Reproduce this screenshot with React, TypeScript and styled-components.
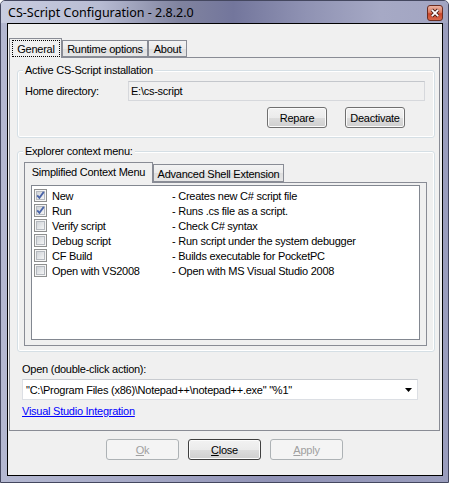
import React from 'react';
import styled, { createGlobalStyle } from 'styled-components';

const GlobalStyle = createGlobalStyle`
  html, body { margin: 0; padding: 0; background: #ffffff; }
  body { font-family: "Liberation Sans", Arial, sans-serif; font-size: 11px; letter-spacing: -0.25px; color: #000; }
  * { box-sizing: border-box; }
`;

const Window = styled.div`
  width: 449px;
  height: 483px;
  display: flex;
  flex-direction: column;
  border: 1px solid #44475f;
  border-radius: 5px 5px 0 0;
  background: linear-gradient(90deg, #b4b8d1 0%, #a6a9c6 30%, #9193b6 60%, #9a9dbd 100%);
  overflow: hidden;
`;

const TitleBar = styled.div`
  height: 22px;
  flex: none;
  display: flex;
  align-items: center;
  justify-content: space-between;
  padding: 0 5px 0 7px;
  background: linear-gradient(90deg, #c9cde0 0%, #b8bcd3 22%, #80839f 40%, #73769c 52%, #8f92b3 68%, #a6a9c5 85%, #a2a5c2 100%);
`;

const TitleText = styled.span`
  font-family: "Noto Sans", "Open Sans", sans-serif;
  font-size: 12.5px;
  letter-spacing: 0;
  color: #000;
  padding-top: 1px;
`;

const CloseButton = styled.div`
  width: 16px;
  height: 16px;
  border: 1px solid #6b2c20;
  border-radius: 3px;
  background: linear-gradient(180deg, #eab2a2 0%, #dd7c62 45%, #c9452a 55%, #d8694c 100%);
  display: flex;
  align-items: center;
  justify-content: center;
  margin-top: 1px;
`;

const Client = styled.div`
  flex: 1;
  margin: 0 5px 6px 6px;
  border: 1px solid #000;
  background: #f0f0f0;
  display: flex;
  flex-direction: column;
  padding: 14px 2px 15px 1px;
`;

const TabStrip = styled.div<{ $h: number }>`
  display: flex;
  align-items: flex-end;
  height: ${p => p.$h}px;
  flex: none;
  position: relative;
  z-index: 1;
`;

const Tab = styled.div<{ $active?: boolean; $w: number }>`
  width: ${p => p.$w}px;
  height: ${p => (p.$active ? 20 : 17)}px;
  margin-bottom: ${p => (p.$active ? -1 : 0)}px;
  border: 1px solid #898c95;
  border-bottom: ${p => (p.$active ? 'none' : '1px solid #898c95')};
  background: ${p =>
    p.$active ? '#f0f0f0' : 'linear-gradient(180deg, #f3f3f3 0%, #ebebeb 50%, #dedede 51%, #e6e6e6 100%)'};
  display: flex;
  align-items: ${p => (p.$active ? 'flex-start' : 'center')};
  justify-content: center;
  white-space: nowrap;
  padding-top: ${p => (p.$active ? 1 : 0)}px;
`;

const FocusRing = styled.span`
  width: 48px;
  height: 17px;
  margin-left: 1px;
  border: 1px dotted #000;
  display: flex;
  align-items: center;
  justify-content: center;
`;

const ActiveLabel = styled.span`
  padding-top: 2px;
`;

const Panel = styled.div`
  flex: 1;
  border: 1px solid #898c95;
  background: #f0f0f0;
  display: flex;
  flex-direction: column;
`;

const Group = styled.fieldset<{ $top: number }>`
  margin: ${p => p.$top}px 4px 0 7px;
  padding: 0;
  min-width: 0;
  border: 1px solid #d5dfe5;
  border-radius: 3px;
  box-shadow: inset 0 0 0 1px #ffffff;
`;

const Legend = styled.legend`
  margin-left: 5px;
  padding: 0 2px;
  line-height: 13px;
  background: #f0f0f0;
`;

const GroupBody = styled.div<{ $pad: string }>`
  padding: ${p => p.$pad};
  display: flex;
  flex-direction: column;
`;

const HomeRow = styled.div`
  display: flex;
  align-items: center;
`;

const FieldLabel = styled.span`
  width: 103px;
`;

const ReadOnlyBox = styled.div`
  flex: 1;
  height: 20px;
  border: 1px solid #d6d8dc;
  border-top-color: #c4c7cc;
  background: #f0f0f0;
  padding-left: 2px;
  display: flex;
  align-items: center;
`;

const ButtonRow = styled.div<{ $gap: number; $center?: boolean }>`
  display: flex;
  justify-content: ${p => (p.$center ? 'center' : 'flex-end')};
  gap: ${p => p.$gap}px;
`;

const Button = styled.div<{ $w: number; $disabled?: boolean; $default?: boolean }>`
  width: ${p => p.$w}px;
  height: 21px;
  border: 1px solid ${p => (p.$disabled ? '#adb2b5' : p.$default ? '#3f3f3f' : '#707070')};
  border-radius: 3px;
  background: ${p =>
    p.$disabled
      ? '#f4f4f4'
      : 'linear-gradient(180deg, #f2f2f2 0%, #ebebeb 50%, #dddddd 51%, #cfcfcf 100%)'};
  box-shadow: inset 0 0 0 1px ${p => (p.$disabled ? '#f4f4f4' : '#fbfbfb')};
  color: ${p => (p.$disabled ? '#a0a0a0' : '#000')};
  display: flex;
  align-items: center;
  justify-content: center;
`;

const InnerTabs = styled.div`
  margin: 4px 7px 5px 6px;
  display: flex;
  flex-direction: column;
`;

const InnerTab = styled.div<{ $active?: boolean; $w: number }>`
  width: ${p => p.$w}px;
  height: ${p => (p.$active ? 21 : 18)}px;
  margin-bottom: ${p => (p.$active ? -1 : 0)}px;
  border: 1px solid #898c95;
  border-bottom: ${p => (p.$active ? 'none' : '1px solid #898c95')};
  background: ${p =>
    p.$active ? '#f0f0f0' : 'linear-gradient(180deg, #f3f3f3 0%, #ebebeb 50%, #dedede 51%, #e6e6e6 100%)'};
  display: flex;
  align-items: ${p => (p.$active ? 'flex-start' : 'center')};
  padding-top: 1px;
  justify-content: center;
  white-space: nowrap;
`;

const InnerPanel = styled.div`
  height: 164px;
  border: 1px solid #898c95;
  background: #f0f0f0;
  padding: 2px 6px 5px 6px;
  display: flex;
`;

const ListBox = styled.div`
  flex: 1;
  border: 1px solid #828790;
  background: #ffffff;
  padding: 2px 0 0 2px;
  display: flex;
  flex-direction: column;
`;

const ListRow = styled.div`
  height: 15px;
  display: grid;
  grid-template-columns: 13px 115px 1fr;
  column-gap: 5px;
  align-items: center;
  white-space: nowrap;
`;

const SectionLabel = styled.div<{ $top: number }>`
  margin: ${p => p.$top}px 0 0 12px;
  line-height: 13px;
`;

const ComboBox = styled.div`
  margin: 3px 0 0 12px;
  width: 396px;
  height: 21px;
  background: #ffffff;
  border: 1px solid #dcdfe4;
  border-top-color: #c8cbd0;
  display: flex;
  align-items: center;
  justify-content: space-between;
  padding: 0 5px 0 3px;
  white-space: nowrap;
`;

const Link = styled.a`
  margin: 5px 0 0 12px;
  align-self: flex-start;
  color: #0000ff;
  text-decoration: underline;
  line-height: 13px;
  cursor: pointer;
`;

const BottomBar = styled.div`
  margin-top: 8px;
  flex: none;
`;

const CheckBox: React.FC<{ checked?: boolean }> = ({ checked }) => (
  <svg width="13" height="13" viewBox="0 0 13 13">
    <defs>
      <linearGradient id="cbfill" x1="0" y1="0" x2="1" y2="1">
        <stop offset="0" stopColor="#cdd1d6" />
        <stop offset="1" stopColor="#f7f7f7" />
      </linearGradient>
    </defs>
    <rect x="0.5" y="0.5" width="12" height="12" fill="#f5f5f5" stroke="#8e8f8f" />
    <rect x="2.5" y="2.5" width="8" height="8" fill="url(#cbfill)" stroke="#b5b9bf" />
    {checked && (
      <path d="M3.2 6.4 L5.4 8.9 L9.8 2.9" fill="none" stroke="#4a64a8" strokeWidth="1.8" />
    )}
  </svg>
);

const items = [
  { name: 'New', desc: '- Creates new C# script file', checked: true },
  { name: 'Run', desc: '- Runs .cs file as a script.', checked: true },
  { name: 'Verify script', desc: '- Check C# syntax', checked: false },
  { name: 'Debug script', desc: '- Run script under the system debugger', checked: false },
  { name: 'CF Build', desc: '- Builds executable for PocketPC', checked: false },
  { name: 'Open with VS2008', desc: '- Open with MS Visual Studio 2008', checked: false },
];

export default function App() {
  return (
    <>
      <GlobalStyle />
      <Window>
        <TitleBar>
          <TitleText>CS-Script Configuration - 2.8.2.0</TitleText>
          <CloseButton>
            <svg width="10" height="10" viewBox="0 0 10 10">
              <path d="M1.8 1.8 L8.2 8.2 M8.2 1.8 L1.8 8.2" stroke="#4a1d14" strokeWidth="3.4" />
              <path d="M1.8 1.8 L8.2 8.2 M8.2 1.8 L1.8 8.2" stroke="#ffffff" strokeWidth="1.8" />
            </svg>
          </CloseButton>
        </TitleBar>
        <Client>
          <TabStrip $h={19}>
            <Tab $active $w={53}>
              <FocusRing>General</FocusRing>
            </Tab>
            <Tab $w={86}>Runtime options</Tab>
            <Tab $w={39}>About</Tab>
          </TabStrip>
          <Panel>
            <Group $top={6}>
              <Legend>Active CS-Script installation</Legend>
              <GroupBody $pad="4px 9px 9px 7px">
                <HomeRow>
                  <FieldLabel>Home directory:</FieldLabel>
                  <ReadOnlyBox>E:\cs-script</ReadOnlyBox>
                </HomeRow>
                <ButtonRow $gap={18} style={{ marginTop: 6, paddingRight: 20 }}>
                  <Button $w={60}>Repare</Button>
                  <Button $w={60}>Deactivate</Button>
                </ButtonRow>
              </GroupBody>
            </Group>
            <Group $top={7}>
              <Legend>Explorer context menu:</Legend>
              <InnerTabs>
                <TabStrip $h={20}>
                  <InnerTab $active $w={129}>
                    <ActiveLabel>Simplified Context Menu</ActiveLabel>
                  </InnerTab>
                  <InnerTab $w={131}>Advanced Shell Extension</InnerTab>
                </TabStrip>
                <InnerPanel>
                  <ListBox>
                    {items.map(it => (
                      <ListRow key={it.name}>
                        <CheckBox checked={it.checked} />
                        <span>{it.name}</span>
                        <span>{it.desc}</span>
                      </ListRow>
                    ))}
                  </ListBox>
                </InnerPanel>
              </InnerTabs>
            </Group>
            <SectionLabel $top={11}>Open (double-click action):</SectionLabel>
            <ComboBox>
              <span>"C:\Program Files (x86)\Notepad++\notepad++.exe" "%1"</span>
              <svg width="7" height="4" viewBox="0 0 7 4">
                <path d="M0 0 H7 L3.5 4 Z" fill="#000" />
              </svg>
            </ComboBox>
            <Link>Visual Studio Integration</Link>
          </Panel>
          <BottomBar>
            <ButtonRow $gap={9} $center>
              <Button $w={73} $disabled>
                <span><u>O</u>k</span>
              </Button>
              <Button $w={73} $default>
                <span><u>C</u>lose</span>
              </Button>
              <Button $w={73} $disabled>
                <span><u>A</u>pply</span>
              </Button>
            </ButtonRow>
          </BottomBar>
        </Client>
      </Window>
    </>
  );
}
